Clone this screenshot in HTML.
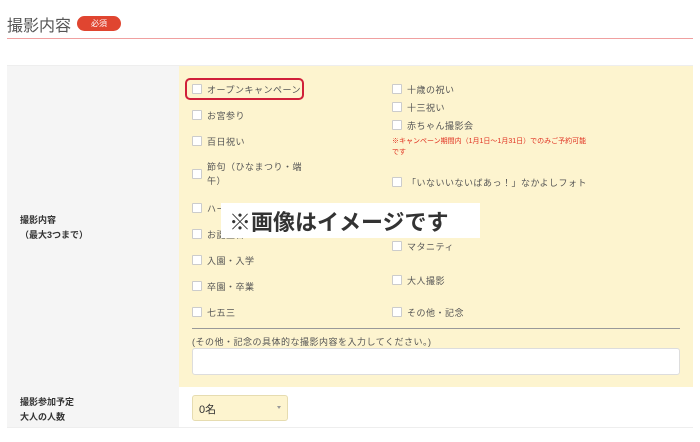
<!DOCTYPE html><html><head><meta charset="utf-8"><style>
*{margin:0;padding:0;box-sizing:border-box}
body{width:700px;height:442px;background:#fff;font-family:"Liberation Sans","Noto Sans CJK JP",sans-serif;color:#444;position:relative;overflow:hidden}
.a{position:absolute}
.cb{position:absolute;width:10px;height:10px;border:1px solid #ccc;background:#fff;border-radius:1px}
.t{position:absolute;font-size:9px;color:#555;letter-spacing:.5px;white-space:nowrap}
</style></head><body>
<div class="a" style="left:7px;top:12px;font-size:16px;color:#555">撮影内容</div>
<div class="a" style="left:77px;top:16px;width:44px;height:15px;border-radius:8px;background:#e04530;color:#fff;font-size:8px;text-align:center;line-height:15px">必須</div>
<div class="a" style="left:7px;top:38px;width:686px;height:1px;background:#f0a0a0"></div>
<div class="a" style="left:7px;top:65px;width:686px;height:1px;background:#eee"></div>
<div class="a" style="left:7px;top:66px;width:172px;height:321px;background:#f5f5f5"></div>
<div class="a" style="left:179px;top:66px;width:514px;height:321px;background:#fdf4cf"></div>
<div class="a" style="left:7px;top:387px;width:172px;height:40px;background:#f5f5f5"></div>
<div class="a" style="left:7px;top:427px;width:686px;height:1px;background:#eee"></div>
<div class="a" style="left:20px;top:213px;font-size:9px;line-height:15px;color:#333;font-weight:bold">撮影内容<br>（最大3つまで）</div>
<div class="a" style="left:20px;top:395px;font-size:9px;line-height:15px;color:#333;font-weight:bold">撮影参加予定<br>大人の人数</div>
<div class="a" style="left:185px;top:78px;width:119px;height:22px;border:2px solid #d0203a;border-radius:5px"></div>
<div class="cb" style="left:192px;top:84px"></div><div class="t" style="left:207px;top:83px">オープンキャンペーン</div>
<div class="cb" style="left:192px;top:110px"></div><div class="t" style="left:207px;top:109px">お宮参り</div>
<div class="cb" style="left:192px;top:136px"></div><div class="t" style="left:207px;top:135px">百日祝い</div>
<div class="cb" style="left:192px;top:169px"></div><div class="t" style="left:207px;top:160px;line-height:14px">節句（ひなまつり・端<br>午）</div>
<div class="cb" style="left:192px;top:203px"></div><div class="t" style="left:207px;top:202px">ハーフ</div>
<div class="cb" style="left:192px;top:229px"></div><div class="t" style="left:207px;top:228px">お誕生日</div>
<div class="cb" style="left:192px;top:255px"></div><div class="t" style="left:207px;top:254px">入園・入学</div>
<div class="cb" style="left:192px;top:281px"></div><div class="t" style="left:207px;top:280px">卒園・卒業</div>
<div class="cb" style="left:192px;top:307px"></div><div class="t" style="left:207px;top:306px">七五三</div>
<div class="cb" style="left:392px;top:84px"></div><div class="t" style="left:407px;top:83px">十歳の祝い</div>
<div class="cb" style="left:392px;top:102px"></div><div class="t" style="left:407px;top:101px">十三祝い</div>
<div class="cb" style="left:392px;top:120px"></div><div class="t" style="left:407px;top:119px">赤ちゃん撮影会</div>
<div class="a" style="left:392px;top:136px;font-size:7px;line-height:11px;color:#e03020;white-space:nowrap">※キャンペーン期間内（1月1日〜1月31日）でのみご予約可能<br>です</div>
<div class="cb" style="left:392px;top:177px"></div><div class="t" style="left:407px;top:176px">「いないいないばあっ！」なかよしフォト</div>
<div class="cb" style="left:392px;top:241px"></div><div class="t" style="left:407px;top:240px">マタニティ</div>
<div class="cb" style="left:392px;top:275px"></div><div class="t" style="left:407px;top:274px">大人撮影</div>
<div class="cb" style="left:392px;top:307px"></div><div class="t" style="left:407px;top:306px">その他・記念</div>
<div class="a" style="left:192px;top:328px;width:488px;height:1px;background:#999"></div>
<div class="t" style="left:192px;top:335px">(その他・記念の具体的な撮影内容を入力してください。)</div>
<div class="a" style="left:192px;top:348px;width:488px;height:27px;background:#fff;border:1px solid #ddd;border-radius:3px"></div>
<div class="a" style="left:221px;top:203px;width:259px;height:35px;background:#fff"></div>
<div class="a" style="left:229px;top:205px;font-size:22px;color:#333;white-space:nowrap;font-weight:bold">※画像はイメージです</div>
<div class="a" style="left:192px;top:395px;width:96px;height:26px;background:#fdf4cf;border:1px solid #e6dcb0;border-radius:3px"></div>
<div class="a" style="left:199px;top:401px;font-size:11px;color:#333">0名</div>
<div class="a" style="left:277px;top:406px;width:0;height:0;border-left:2px solid transparent;border-right:2px solid transparent;border-top:3px solid #999"></div>
</body></html>
